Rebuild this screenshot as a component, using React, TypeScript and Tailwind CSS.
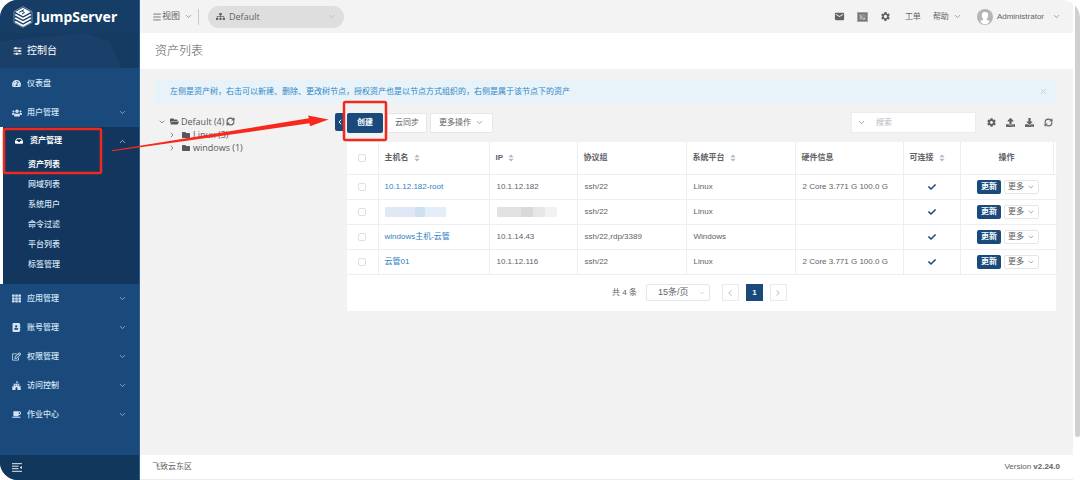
import type { ReactNode } from "react";
import {
  FaAddressBook,
  FaCheck,
  FaCoffee,
  FaCog,
  FaFolder,
  FaFolderOpen,
  FaFortAwesome,
  FaInbox,
  FaRegEdit,
  FaSitemap,
  FaTachometerAlt,
  FaTh,
  FaUsers,
  FaDownload,
  FaUpload,
} from "react-icons/fa";
import { MdEmail, MdSettings } from "react-icons/md";
import {
  ChevronDown,
  ChevronLeft,
  ChevronRight,
  ChevronUp,
  Menu,
  RefreshCw,
  X,
} from "lucide-react";

type MenuItem = { label: string; icon: ReactNode; children?: string[]; leaf?: boolean };

const menu: MenuItem[] = [
  { label: "仪表盘", icon: <FaTachometerAlt size={9} />, leaf: true },
  { label: "用户管理", icon: <FaUsers size={10} /> },
  {
    label: "资产管理",
    icon: <FaInbox size={8} />,
    children: ["资产列表", "网域列表", "系统用户", "命令过滤", "平台列表", "标签管理"],
  },
  { label: "应用管理", icon: <FaTh size={9} /> },
  { label: "账号管理", icon: <FaAddressBook size={9} /> },
  { label: "权限管理", icon: <FaRegEdit size={9} /> },
  { label: "访问控制", icon: <FaFortAwesome size={9} /> },
  { label: "作业中心", icon: <FaCoffee size={9} /> },
];

type Asset = { name: string; ip: string; protocol: string; platform: string; hardware: string };

const assets: Asset[] = [
  { name: "10.1.12.182-root", ip: "10.1.12.182", protocol: "ssh/22", platform: "Linux", hardware: "2 Core 3.771 G 100.0 G" },
  { name: "", ip: "", protocol: "ssh/22", platform: "Linux", hardware: "" },
  { name: "windows主机-云管", ip: "10.1.14.43", protocol: "ssh/22,rdp/3389", platform: "Windows", hardware: "" },
  { name: "云管01", ip: "10.1.12.116", protocol: "ssh/22", platform: "Linux", hardware: "2 Core 3.771 G 100.0 G" },
];

const columns = [
  { label: "主机名", sort: true },
  { label: "IP", sort: true },
  { label: "协议组", sort: false },
  { label: "系统平台", sort: true },
  { label: "硬件信息", sort: false },
  { label: "可连接", sort: true },
];

function Logo() {
  return (
    <svg viewBox="0 0 20 22" className="h-[22px] w-5" aria-hidden="true" fill="none" stroke="#fff">
      <path d="M10 .6 19 5.500v11L10 21.400 1 16.500v-11z" strokeWidth=".6" opacity=".7" />
      <path d="M10 1.800 17.800 6 10 10.200 2.200 6z" fill="#fff" stroke="none" />
      <path d="M6 6.400 11 3.700M9 8l2.600-1.400-2.400-1.300" stroke="#163e68" strokeWidth="1" />
      <path d="M2.200 8.500 10 12.700l7.800-4.200M2.200 12 10 16.200l7.800-4.200M2.200 15.500 10 19.700l7.800-4.200" strokeWidth="1.700" />
    </svg>
  );
}

function Sliders() {
  return (
    <svg viewBox="0 0 9 8" className="h-2 w-[9px]" aria-hidden="true" stroke="currentColor" fill="currentColor">
      <path d="M.5 1.200h8M.5 4h8M.5 6.800h8" strokeWidth=".9" />
      <path d="M2 .3h1.400v1.800H2zM5.800 3.100h1.400v1.800H5.800zM3 5.900h1.400v1.800H3z" strokeWidth=".4" />
    </svg>
  );
}

function TerminalMark() {
  return (
    <svg viewBox="0 0 11 10" className="h-[10px] w-[11px]" aria-hidden="true" fill="none">
      <path d="M0 0h11v10H0z" fill="#a3a5a8" />
      <path d="M1.500 1.500h8v7h-8z" fill="#8a8d91" stroke="#66696d" strokeWidth=".8" />
      <path d="M3 3.400 4.800 5 3 6.600M5.500 6.800H8" stroke="#f0f0f0" strokeWidth=".8" />
    </svg>
  );
}

function SortMark() {
  return (
    <svg viewBox="0 0 6 8" className="ml-[5px] inline h-2 w-[6px]" aria-hidden="true" fill="#b4b8bf">
      <path d="M3 .4 5.600 3.300H.4zM3 7.600 .4 4.700h5.200z" />
    </svg>
  );
}

function Sidebar() {
  return (
    <aside className="flex w-[140px] shrink-0 flex-col border-r border-[#2f5f90] bg-[#194a7b] text-[#d3e4f5]">
      <div className="flex h-[33px] items-center gap-[3px] bg-[#163d66] pl-[13px] text-white">
        <Logo />
        <span className="font-['Noto_Sans'] text-sm font-bold">JumpServer</span>
      </div>
      <div className="relative flex h-[35px] items-center overflow-hidden bg-[#163b62] pl-[13px] text-[10px] text-white">
        <svg viewBox="0 0 140 35" preserveAspectRatio="none" className="absolute inset-0 h-full w-full" aria-hidden="true">
          <path d="M0 8 85 0l25 8 12 27H0z" fill="#1a4069" />
        </svg>
        <a href="#console" className="relative flex items-center gap-[5px]">
          <Sliders />
          控制台
        </a>
      </div>
      <nav className="flex-1 pt-px text-[8px] font-medium">
        {menu.map((item) =>
          item.children ? (
            <div key={item.label} className="border-l-[3px] border-white bg-[#12365d] pb-[9px]">
              <button type="button" className="flex h-7 w-full items-center pl-3 pr-3 font-bold text-white">
                <span className="flex w-[15px]">{item.icon}</span>
                {item.label}
                <ChevronUp size={9} strokeWidth={1.500} className="ml-auto" />
              </button>
              {item.children.map((child, index) => (
                <a
                  key={child}
                  href="#assets"
                  className={
                    index === 0
                      ? "flex h-5 items-center pl-[25px] font-bold text-white"
                      : "flex h-5 items-center pl-[25px]"
                  }
                >
                  {child}
                </a>
              ))}
            </div>
          ) : (
            <button key={item.label} type="button" className="flex h-[29px] w-full items-center px-3">
              <span className="flex w-[15px]">{item.icon}</span>
              {item.label}
              {!item.leaf && <ChevronDown size={9} strokeWidth={1.500} className="ml-auto" />}
            </button>
          ),
        )}
      </nav>
      <div className="flex h-[25px] items-center bg-[#12375d] pl-3">
        <button type="button" aria-label="收起菜单">
          <svg viewBox="0 0 10 9" className="h-[9px] w-[10px]" aria-hidden="true" stroke="#fff" fill="#fff">
            <path d="M0 .7h10M0 3.200h6.500M0 5.700h6.500M0 8.300h10" strokeWidth=".9" />
            <path d="M7.700 4.500 9.800 2.900v3.200z" stroke="none" />
          </svg>
        </button>
      </div>
    </aside>
  );
}

function TopBar() {
  return (
    <header className="flex h-[33px] items-center bg-[#f3f3f3] pl-3 pr-3 text-[8px] text-[#5f6368]">
      <button type="button" className="flex items-center text-[9px]">
        <Menu size={10} strokeWidth={2} />
        视图
        <ChevronDown size={9} strokeWidth={1.500} className="ml-1" />
      </button>
      <span className="ml-[5px] mr-[9px] h-4 w-px bg-[#c9c9c9]" />
      <button type="button" className="flex h-[22px] w-[136px] items-center rounded-full bg-[#dedede] px-2 font-['Open_Sans'] text-[9px]">
        <FaSitemap size={9} className="mr-1" />
        Default
        <ChevronDown size={9} strokeWidth={1.500} className="ml-auto text-[#a8abb0]" />
      </button>
      <div className="ml-auto flex items-center">
        <button type="button" aria-label="站内信" className="mr-3">
          <MdEmail size={11} />
        </button>
        <button type="button" aria-label="终端" className="mr-3">
          <TerminalMark />
        </button>
        <button type="button" aria-label="设置" className="mr-[14px]">
          <MdSettings size={11} />
        </button>
        <a href="#tickets" className="mr-3">工单</a>
        <button type="button" className="mr-[15px] flex items-center gap-1">
          帮助
          <ChevronDown size={9} strokeWidth={1.500} />
        </button>
        <button type="button" className="flex items-center">
          <svg viewBox="0 0 16 16" className="mr-1 h-4 w-4" aria-hidden="true">
            <circle cx="8" cy="8" r="8" fill="#b5b5b5" />
            <path d="M8 3a3.200 3.200 0 0 1 3.200 3.300C11.200 8 10.500 9.200 9.600 9.900c.2.900 1.200 1.200 3.200 2-1.100 2.400-2.900 3.400-4.800 3.400s-3.700-1-4.800-3.400c2-.8 3-1.100 3.200-2C5.500 9.200 4.800 8 4.800 6.300A3.200 3.200 0 0 1 8 3z" fill="#fff" />
          </svg>
          Administrator
          <ChevronDown size={9} strokeWidth={1.500} className="ml-2" />
        </button>
      </div>
    </header>
  );
}

function AssetTree() {
  return (
    <div className="w-[180px] shrink-0 pl-[3px] pt-[3px] font-['Open_Sans'] text-[9px] leading-[13px] text-[#55585c]">
      <div className="flex items-center">
        <ChevronDown size={8} strokeWidth={2} />
        <FaFolderOpen size={9} className="ml-1 mr-[2px]" />
        Default (4)
        <button type="button" aria-label="刷新节点" className="ml-[2px]">
          <RefreshCw size={9} strokeWidth={3} />
        </button>
      </div>
      {["Linux (3)", "windows (1)"].map((node) => (
        <div key={node} className="flex items-center pl-[10px]">
          <ChevronRight size={8} strokeWidth={2} />
          <FaFolder size={8} className="ml-[6px] mr-[3px]" />
          {node}
        </div>
      ))}
    </div>
  );
}

function Toolbar() {
  return (
    <div className="mb-[9px] flex h-[21px] items-center text-[8px] text-[#5f6368]">
      <button type="button" className="h-5 rounded-[2px] bg-[#194a7b] px-[10px] font-bold text-white">创建</button>
      <button type="button" className="ml-1 h-5 rounded-[2px] border border-[#e7e7e7] bg-white px-[7px]">云同步</button>
      <button type="button" className="ml-[3px] flex h-5 items-center gap-1 rounded-[2px] border border-[#e7e7e7] bg-white px-2">
        更多操作
        <ChevronDown size={9} strokeWidth={1.500} />
      </button>
      <div className="ml-auto mr-[11px] flex h-[21px] w-[125px] items-center border border-[#ececec] bg-white pl-[5px]">
        <ChevronDown size={9} strokeWidth={1.500} className="shrink-0" />
        <input
          aria-label="搜索"
          placeholder="搜索"
          className="ml-[10px] w-full min-w-0 bg-transparent outline-none placeholder:text-[#b6b9be]"
        />
      </div>
      <div className="flex items-center gap-[10px] pr-[3px]">
        <button type="button" aria-label="表格设置"><FaCog size={9} /></button>
        <button type="button" aria-label="导入"><FaUpload size={9} /></button>
        <button type="button" aria-label="导出"><FaDownload size={9} /></button>
        <button type="button" aria-label="刷新"><RefreshCw size={9} strokeWidth={3} /></button>
      </div>
    </div>
  );
}

const box = "block mx-auto h-2 w-2 appearance-none rounded-[2px] border border-[#dcdfe6] bg-white";

function AssetTable() {
  return (
    <table className="w-full table-fixed text-left text-[8px] text-[#606266]">
      <colgroup>
        <col className="w-[31px]" />
        <col className="w-[111px]" />
        <col className="w-[88px]" />
        <col className="w-[109px]" />
        <col className="w-[109px]" />
        <col className="w-[108px]" />
        <col className="w-[57px]" />
        <col className="w-[93px]" />
        <col className="w-[3px]" />
      </colgroup>
      <thead>
        <tr className="h-8 border-b border-[#ebeef2]">
          <th className="border-r border-[#ebeef2]">
            <input type="checkbox" aria-label="全选" className={box} />
          </th>
          {columns.map((column) => (
            <th key={column.label} className="whitespace-nowrap border-r border-[#ebeef2] pl-[6px] font-bold">
              {column.label}
              {column.sort && <SortMark />}
            </th>
          ))}
          <th className="border-r border-[#ebeef2] text-center font-bold">操作</th>
          <td />
        </tr>
      </thead>
      <tbody>
        {assets.map((asset, index) => (
          <tr key={index} className="h-[25px] border-b border-[#ebeef2]">
            <td className="border-r border-[#ebeef2]">
              <input type="checkbox" aria-label="选择资产" className={box} />
            </td>
            <td className="whitespace-nowrap border-r border-[#ebeef2] pl-[6px]">
              {asset.name ? (
                <a href="#asset" className="text-[#2f7fc1]">{asset.name}</a>
              ) : (
                <span className="flex h-[10px] w-[61px]">
                  <span className="flex-[3] bg-[#dfe8f4]" />
                  <span className="flex-1 bg-[#cfe0f0]" />
                  <span className="flex-[2] bg-[#e3eef9]" />
                </span>
              )}
            </td>
            <td className="whitespace-nowrap border-r border-[#ebeef2] pl-[7px]">
              {asset.ip || (
                <span className="flex h-[10px] w-[60px]">
                  <span className="flex-[2] bg-[#e2e2e2]" />
                  <span className="flex-1 bg-[#d9d9d9]" />
                  <span className="flex-1 bg-[#e6e6e6]" />
                  <span className="flex-1 bg-[#f2f2f2]" />
                </span>
              )}
            </td>
            <td className="whitespace-nowrap border-r border-[#ebeef2] pl-[7px]">{asset.protocol}</td>
            <td className="whitespace-nowrap border-r border-[#ebeef2] pl-[7px]">{asset.platform}</td>
            <td className="whitespace-nowrap border-r border-[#ebeef2] pl-[7px]">{asset.hardware}</td>
            <td className="border-r border-[#ebeef2] text-[#194a7b]">
              <FaCheck size={8} className="mx-auto" />
            </td>
            <td className="border-r border-[#ebeef2]" colSpan={2}>
              <div className="flex items-center justify-center gap-[3px]">
                <button type="button" className="h-[14px] rounded-[2px] bg-[#194a7b] px-1 font-bold text-white">更新</button>
                <button type="button" className="flex h-[14px] items-center gap-[3px] rounded-[2px] border border-[#e4e6ea] px-[3px]">
                  更多
                  <ChevronDown size={8} strokeWidth={1.500} />
                </button>
              </div>
            </td>
          </tr>
        ))}
      </tbody>
    </table>
  );
}

function Pagination() {
  return (
    <div className="flex h-9 items-center justify-center pr-1 text-[8px] text-[#606266]">
      <span>共 4 条</span>
      <div className="relative ml-[9px] mr-3">
        <select aria-label="每页条数" className="h-[17px] w-16 appearance-none rounded-[2px] border border-[#e4e6ea] bg-white pl-[11px] text-[9px]">
          <option>15条/页</option>
        </select>
        <ChevronDown size={8} strokeWidth={1.500} className="pointer-events-none absolute right-1 top-[5px] text-[#b4b8bf]" />
      </div>
      <div className="flex gap-[7px]">
        <button type="button" aria-label="上一页" className="flex size-[17px] items-center justify-center border border-[#e8eaee] text-[#a8abb0]">
          <ChevronLeft size={10} />
        </button>
        <button type="button" className="size-[17px] bg-[#194a7b] font-bold text-white">1</button>
        <button type="button" aria-label="下一页" className="flex size-[17px] items-center justify-center border border-[#e8eaee] text-[#a8abb0]">
          <ChevronRight size={10} />
        </button>
      </div>
    </div>
  );
}

function Annotations() {
  return (
    <svg width="400" height="190" viewBox="0 0 400 190" className="pointer-events-none absolute left-0 top-0" aria-hidden="true">
      <g fill="none" stroke="#f0281e" strokeWidth="2.500">
        <rect x="4" y="129" width="97" height="44" rx="1.500" />
        <rect x="344" y="102" width="42" height="38" rx="1.500" />
      </g>
      <path d="M112 150.300 309 118.300 308 115.500 328.500 119.500 310 126.200 309.500 123.300 112 151.300z" fill="#f8291c" />
    </svg>
  );
}

export default function App() {
  return (
    <div className="bg-white font-['Liberation_Sans','Noto_Sans_CJK_SC',sans-serif]">
      <div className="relative flex min-h-screen overflow-hidden rounded-l-[18px] rounded-tr-[18px]">
        <Sidebar />
        <div className="flex min-w-0 flex-1 flex-col">
          <TopBar />
          <div className="flex h-9 items-center bg-white pl-[15px]">
            <h1 className="text-xs font-light text-[#55585c]">资产列表</h1>
          </div>
          <main className="flex-1 bg-[#f2f2f2] pb-4 pl-[15px] pr-[17px] pt-[11px]">
            <div className="flex h-[23px] items-center bg-[#e8f3f9] pl-[15px] pr-2 text-[8px] text-[#2f86c6]">
              <p className="whitespace-nowrap">
                左侧是资产树，右击可以新建、删除、更改树节点，授权资产也是以节点方式组织的，右侧是属于该节点下的资产
              </p>
              <button type="button" aria-label="关闭" className="ml-auto text-[#b4bec6]">
                <X size={9} strokeWidth={1.500} />
              </button>
            </div>
            <div className="mt-[9px] flex">
              <AssetTree />
              <button type="button" aria-label="收起资产树" className="mr-[3px] mt-px flex h-[18px] w-[9px] shrink-0 items-center justify-center rounded-l-[2px] bg-[#194a7b] text-white">
                <ChevronLeft size={8} strokeWidth={3} />
              </button>
              <section className="min-w-0 flex-1">
                <Toolbar />
                <div className="bg-white">
                  <AssetTable />
                  <Pagination />
                </div>
              </section>
            </div>
          </main>
          <footer className="flex h-[25px] items-center justify-between border-b border-[#ebebeb] bg-white pl-3 pr-[13px] text-[8px] text-[#606266]">
            <span>飞致云东区</span>
            <span>
              Version <strong>v2.24.0</strong>
            </span>
          </footer>
        </div>
        <div className="flex w-[7px] shrink-0 justify-end bg-white">
          <div className="h-[91%] w-[5px] rounded-b-sm bg-[#d0d0d0]" />
        </div>
        <Annotations />
      </div>
    </div>
  );
}
